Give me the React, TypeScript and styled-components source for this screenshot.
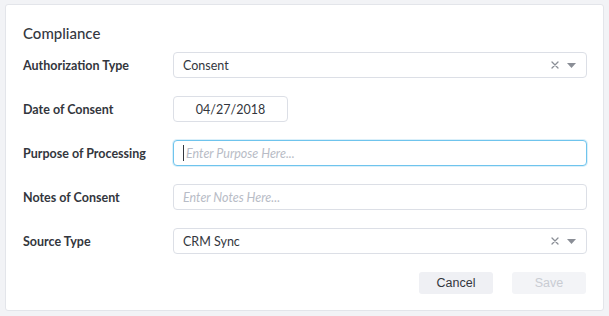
import React from 'react';
import styled, { createGlobalStyle } from 'styled-components';

const GlobalStyle = createGlobalStyle`
    html, body {
        margin: 0;
        padding: 0;
        background-color: #f2f3f6;
    }
    body {
        font-family: "Lato", "Open Sans", sans-serif;
        color: #33363d;
    }
`;

interface IField {
    label: string;
    kind: 'select' | 'date' | 'text';
    value?: string;
    placeholder?: string;
    focused?: boolean;
}

const fields: IField[] = [
    { label: 'Authorization Type', kind: 'select', value: 'Consent' },
    { label: 'Date of Consent', kind: 'date', value: '04/27/2018' },
    { label: 'Purpose of Processing', kind: 'text', placeholder: 'Enter Purpose Here...', focused: true },
    { label: 'Notes of Consent', kind: 'text', placeholder: 'Enter Notes Here...' },
    { label: 'Source Type', kind: 'select', value: 'CRM Sync' },
];

const ClearIcon = () => (
    <svg width="8" height="8" viewBox="0 0 8 8">
        <path d="M1 1L7 7M7 1L1 7" stroke="#8a8e96" strokeWidth="1.3" strokeLinecap="round" />
    </svg>
);

const CaretIcon = () => (
    <svg width="9" height="5" viewBox="0 0 9 5">
        <path d="M0 0H9L4.5 5Z" fill="#8a8e96" />
    </svg>
);

const FieldControl = ({ field }: { field: IField }) => {
    if (field.kind === 'select') {
        return (
            <SelectBox>
                <span>{field.value}</span>
                <SelectIcons>
                    <ClearIcon />
                    <CaretIcon />
                </SelectIcons>
            </SelectBox>
        );
    }
    if (field.kind === 'date') {
        return <DateBox>{field.value}</DateBox>;
    }
    return (
        <TextBox focused={field.focused}>
            {field.focused && <Cursor />}
            <Placeholder>{field.placeholder}</Placeholder>
        </TextBox>
    );
};

const App = () => {
    return (
        <>
            <GlobalStyle />
            <Page>
                <Card>
                    <Title>Compliance</Title>
                    <Form>
                        {fields.map((field) => (
                            <Row key={field.label}>
                                <Label>{field.label}</Label>
                                <FieldControl field={field} />
                            </Row>
                        ))}
                    </Form>
                    <Actions>
                        <Button>Cancel</Button>
                        <Button disabledLook>Save</Button>
                    </Actions>
                </Card>
            </Page>
        </>
    );
};

export default App;

const Page = styled.div`
    box-sizing: border-box;
    height: 316px;
    padding: 4px 5px 5px 5px;
`;

const Card = styled.div`
    background-color: #fff;
    border: 1px solid #e3e5ea;
    border-radius: 3px;
    box-sizing: border-box;
    height: 307px;
    padding: 18px 17px 0 17px;
`;

const Title = styled.h3`
    color: #35383f;
    font-size: 15px;
    font-weight: 500;
    line-height: 20px;
    margin: 0 0 9px 0;
`;

const Form = styled.div`
    display: flex;
    flex-direction: column;
    gap: 18px;
`;

const Row = styled.div`
    align-items: center;
    display: grid;
    grid-template-columns: 150px 414px;
    height: 26px;
`;

const Label = styled.label`
    color: #33363d;
    font-size: 12.5px;
    font-weight: 700;
`;

const BaseInput = styled.div`
    align-items: center;
    background-color: #fff;
    border: 1px solid #dcdfe6;
    border-radius: 4px;
    box-sizing: border-box;
    display: flex;
    font-size: 12.5px;
    height: 26px;
    padding: 0 9px;
`;

const SelectBox = styled(BaseInput)`
    color: #33363d;
    justify-content: space-between;
`;

const SelectIcons = styled.div`
    align-items: center;
    display: flex;
    gap: 8px;
    padding-right: 1px;
`;

const DateBox = styled(BaseInput)`
    color: #33363d;
    justify-content: center;
    width: 115px;
`;

const TextBox = styled(BaseInput)<{ focused?: boolean }>`
    border-color: ${(props) => (props.focused ? '#6fc4ed' : '#dcdfe6')};
    box-shadow: ${(props) => (props.focused ? '0 0 0 1px rgba(111, 196, 237, 0.25)' : 'none')};
`;

const Cursor = styled.span`
    background-color: #33363d;
    display: inline-block;
    height: 16px;
    margin-right: 2px;
    width: 1px;
`;

const Placeholder = styled.span`
    color: #b8bcc6;
    font-style: italic;
`;

const Actions = styled.div`
    display: flex;
    gap: 19px;
    justify-content: flex-end;
    margin-top: 18px;
`;

const Button = styled.button<{ disabledLook?: boolean }>`
    background-color: ${(props) => (props.disabledLook ? '#f3f4f7' : '#eff0f4')};
    border: none;
    border-radius: 3px;
    color: ${(props) => (props.disabledLook ? '#c9ccd3' : '#33363d')};
    font-family: "Liberation Sans", Arial, sans-serif;
    font-size: 12.5px;
    height: 22px;
    padding: 0;
    width: 74px;
`;
